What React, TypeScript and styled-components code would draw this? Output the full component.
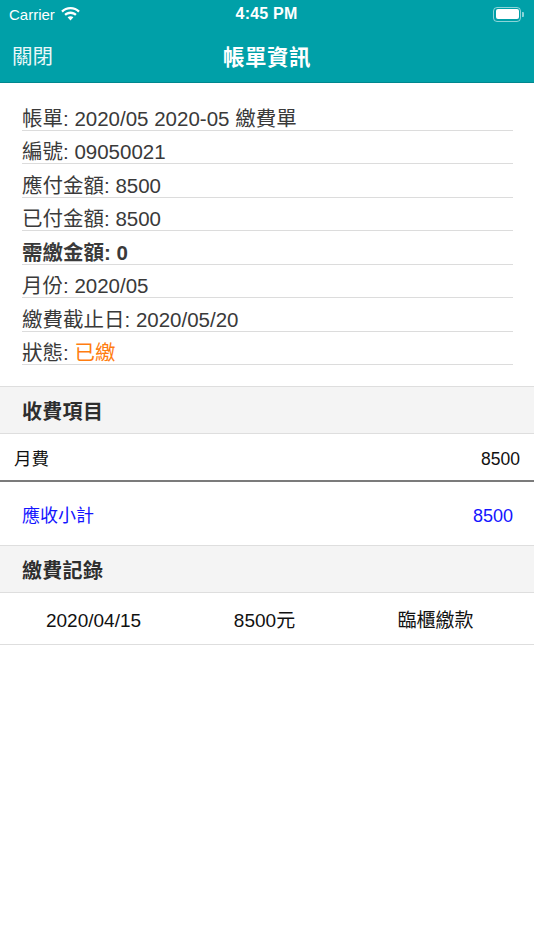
import styled, { createGlobalStyle } from 'styled-components';

const GlobalStyle = createGlobalStyle`
  html, body {
    margin: 0;
    padding: 0;
    background: #ffffff;
  }
  body {
    font-family: 'Liberation Sans', 'Noto Sans CJK TC', sans-serif;
    -webkit-font-smoothing: antialiased;
  }
`;

interface InfoItem {
  label: string;
  value: string;
  bold?: boolean;
  accent?: boolean;
}

interface PaymentRecord {
  date: string;
  amount: string;
  method: string;
}

const infoItems: InfoItem[] = [
  { label: '帳單', value: '2020/05 2020-05 繳費單' },
  { label: '編號', value: '09050021' },
  { label: '應付金額', value: '8500' },
  { label: '已付金額', value: '8500' },
  { label: '需繳金額', value: '0', bold: true },
  { label: '月份', value: '2020/05' },
  { label: '繳費截止日', value: '2020/05/20' },
  { label: '狀態', value: '已繳', accent: true },
];

const records: PaymentRecord[] = [
  { date: '2020/04/15', amount: '8500元', method: '臨櫃繳款' },
];

const Page = styled.div`
  width: 534px;
  min-height: 950px;
  background: #ffffff;
`;

const TopBar = styled.header`
  background: #00a0a8;
  border-bottom: 1px solid #00878e;
  color: #ffffff;
`;

const StatusBar = styled.div`
  height: 28px;
  display: grid;
  grid-template-columns: 1fr auto 1fr;
  align-items: center;
  padding: 0 10px 0 9px;
  font-size: 15px;
`;

const Carrier = styled.div`
  display: flex;
  align-items: center;
  gap: 6px;
`;

const Clock = styled.div`
  font-size: 16px;
  font-weight: 700;
  letter-spacing: 0.2px;
`;

const Battery = styled.div`
  justify-self: end;
  display: flex;
  align-items: center;
  gap: 1px;
`;

const BatteryBody = styled.div`
  width: 23px;
  height: 10px;
  padding: 1.5px;
  border: 1.5px solid rgba(255, 255, 255, 0.55);
  border-radius: 4px;

  &::after {
    content: '';
    display: block;
    width: 100%;
    height: 100%;
    background: #ffffff;
    border-radius: 2px;
  }
`;

const BatteryNub = styled.div`
  width: 2px;
  height: 5px;
  background: rgba(255, 255, 255, 0.55);
  border-radius: 0 1px 1px 0;
`;

const NavBar = styled.div`
  height: 54px;
  display: grid;
  grid-template-columns: 1fr auto 1fr;
  align-items: center;
  padding: 0 12px;
`;

const NavButton = styled.span`
  font-size: 20.5px;
  color: #eaf7f8;
`;

const NavTitle = styled.h1`
  margin: 0;
  font-size: 21.5px;
  font-weight: 600;
  letter-spacing: 0.5px;
`;

const InfoList = styled.div`
  padding: 14px 21px 0 22px;
`;

const InfoRow = styled.div<{ $bold?: boolean }>`
  padding-top: 9.5px;
  height: 23px;
  line-height: 23px;
  border-bottom: 1px solid #dcdcdc;
  font-size: 20.5px;
  color: #3a3a3a;
  font-weight: ${(p) => (p.$bold ? 700 : 400)};
  white-space: nowrap;
`;

const InfoValue = styled.span<{ $accent?: boolean }>`
  color: ${(p) => (p.$accent ? '#ff7d10' : 'inherit')};
`;

const SectionHeader = styled.div<{ $gap?: number }>`
  margin-top: ${(p) => p.$gap ?? 0}px;
  height: 46px;
  display: flex;
  align-items: center;
  padding: 0 22px;
  background: #f4f4f4;
  border-top: 1px solid #dedede;
  border-bottom: 1px solid #dedede;
  font-size: 20px;
  font-weight: 700;
  color: #2e2e2e;
  letter-spacing: 0.3px;
`;

/* label / amount rows: baseline-aligned so Latin digits and CJK sit on one line */
const AmountRow = styled.div<{ $height: number; $color: string; $size: number; $pad: string }>`
  height: ${(p) => p.$height}px;
  display: flex;
  flex-wrap: wrap;
  align-content: center;
  align-items: baseline;
  justify-content: space-between;
  padding: ${(p) => p.$pad};
  font-size: ${(p) => p.$size}px;
  color: ${(p) => p.$color};
`;

const FeeRow = styled(AmountRow)`
  border-bottom: 2px solid #7b7b7b;
`;

const RecordRow = styled.div`
  height: 51px;
  display: grid;
  grid-template-columns: repeat(3, 1fr);
  align-content: center;
  align-items: baseline;
  padding: 0 13px 0 8px;
  border-bottom: 1px solid #dedede;
  font-size: 19px;
  color: #111111;
`;

const RecordCell = styled.span`
  text-align: center;
`;

function WifiIcon() {
  return (
    <svg width="19" height="14" viewBox="0 0 19 14" fill="#ffffff">
      <path d="M9.5 0C5.9 0 2.6 1.4 0.2 3.7l1.6 1.7C3.8 3.5 6.5 2.3 9.5 2.3s5.7 1.2 7.7 3.1l1.6-1.7C16.4 1.4 13.1 0 9.5 0z" />
      <path d="M9.5 4.6c-2.4 0-4.6 0.9-6.2 2.5l1.6 1.7c1.2-1.2 2.8-1.9 4.6-1.9s3.4 0.7 4.6 1.9l1.6-1.7C14.1 5.5 11.9 4.6 9.5 4.6z" />
      <path d="M9.5 9.2c-1.1 0-2.1 0.4-2.9 1.1L9.5 13.4l2.9-3.1C11.6 9.6 10.6 9.2 9.5 9.2z" />
    </svg>
  );
}

function App() {
  return (
    <Page>
      <GlobalStyle />
      <TopBar>
        <StatusBar>
          <Carrier>
            <span>Carrier</span>
            <WifiIcon />
          </Carrier>
          <Clock>4:45 PM</Clock>
          <Battery>
            <BatteryBody />
            <BatteryNub />
          </Battery>
        </StatusBar>
        <NavBar>
          <NavButton>關閉</NavButton>
          <NavTitle>帳單資訊</NavTitle>
          <span />
        </NavBar>
      </TopBar>

      <InfoList>
        {infoItems.map((item) => (
          <InfoRow key={item.label} $bold={item.bold}>
            {item.label}: <InfoValue $accent={item.accent}>{item.value}</InfoValue>
          </InfoRow>
        ))}
      </InfoList>

      <SectionHeader $gap={21}>收費項目</SectionHeader>
      <FeeRow $height={46} $color="#111111" $size={17.5} $pad="0 14px">
        <span>月費</span>
        <span>8500</span>
      </FeeRow>
      <AmountRow $height={63} $color="#1414ff" $size={18} $pad="0 21px 0 22px">
        <span>應收小計</span>
        <span>8500</span>
      </AmountRow>

      <SectionHeader>繳費記錄</SectionHeader>
      {records.map((r) => (
        <RecordRow key={r.date}>
          <RecordCell>{r.date}</RecordCell>
          <RecordCell>{r.amount}</RecordCell>
          <RecordCell>{r.method}</RecordCell>
        </RecordRow>
      ))}
    </Page>
  );
}

export default App;
